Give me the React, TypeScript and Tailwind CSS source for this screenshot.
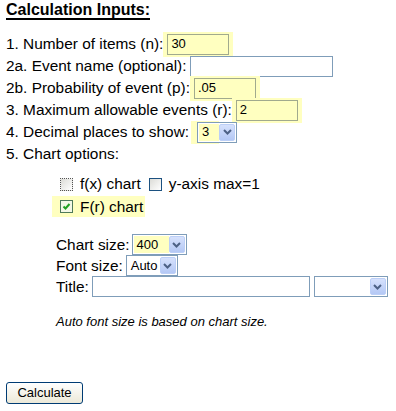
import React from 'react';

const Chevron = () => (
  <svg width="9" height="6" viewBox="0 0 9 6">
    <path d="M1 1 L4.5 4.5 L8 1" fill="none" stroke="#4d6185" strokeWidth="2" />
  </svg>
);

const DropBtn = () => (
  <span className="flex h-[17px] w-[16px] shrink-0 items-center justify-center rounded-[2px] border border-[#bccff7] bg-gradient-to-b from-[#d6e1fc] to-[#b4c8f5]">
    <Chevron />
  </span>
);

type SelectProps = { value: string; widthClass: string; hl?: boolean; hlClass?: string };

const Select: React.FC<SelectProps> = ({ value, widthClass, hl, hlClass }) => (
  <span className={`flex h-[21px] items-center border border-[#7f9db9] bg-white p-[1px] text-[13px] ${widthClass}`}>
    <span className={`flex h-full flex-1 items-center pl-[3px] ${hl ? 'bg-[#ffffc0]' : ''} ${hlClass ?? ''}`}>{value}</span>
    <DropBtn />
  </span>
);

type InputProps = { value?: string; widthClass: string; hl?: boolean };

const TextBox: React.FC<InputProps> = ({ value, widthClass, hl }) => {
  if (hl) {
    return (
      <span className="flex h-[25px] items-center bg-[#ffffc0] pl-[4px] pr-[4px]">
        <span className={`flex h-[21px] items-center border border-[#a1aa8e] bg-[#ffffc0] pl-[3px] text-[13px] ${widthClass}`}>
          {value}
        </span>
      </span>
    );
  }
  return (
    <span className={`flex h-[21px] items-center border border-[#7f9db9] bg-white pl-[3px] text-[13px] ${widthClass}`}>
      {value}
    </span>
  );
};

const Row: React.FC<{ children: React.ReactNode }> = ({ children }) => (
  <div className="flex h-[22px] items-center whitespace-nowrap">{children}</div>
);

const App: React.FC = () => {
  return (
    <div className="h-[411px] w-[396px] overflow-hidden bg-white font-['Liberation_Sans',Arial,sans-serif] text-black">
      <div className="pl-[6px]">
        <h2 className="text-[16px] font-bold leading-[20px] underline decoration-[1.5px] underline-offset-[3px]">
          Calculation Inputs:
        </h2>

        {/* numbered inputs */}
        <div className="mt-[13px] text-[15.4px]">
          <Row>
            <span>1. Number of items (n):</span>
            <TextBox value="30" widthClass="w-[62px]" hl />
          </Row>
          <Row>
            <span className="mr-[3px]">2a. Event name (optional):</span>
            <TextBox widthClass="w-[143px]" />
          </Row>
          <Row>
            <span>2b. Probability of event (p):</span>
            <TextBox value=".05" widthClass="w-[62px]" hl />
          </Row>
          <Row>
            <span>3. Maximum allowable events (r):</span>
            <TextBox value="2" widthClass="w-[62px]" hl />
          </Row>
          <Row>
            <span>4. Decimal places to show:</span>
            <span className="ml-[2px] flex h-[23px] items-center bg-[linear-gradient(to_right,#ffffc0_28px,transparent_28px)] pl-[6px]">
              <Select value="3" widthClass="w-[40px]" hl />
            </span>
          </Row>
          <Row>
            <span>5. Chart options:</span>
          </Row>
        </div>

        {/* chart checkboxes */}
        <div className="mt-[8px] pl-[54px] text-[15.4px]">
          <div className="flex h-[22px] items-center whitespace-nowrap">
            <span className="h-[13px] w-[13px] border border-dotted border-[#555] bg-gradient-to-br from-[#dcdcd7] to-white" />
            <span className="ml-[7px]">f(x) chart</span>
            <span className="ml-[8px] h-[13px] w-[13px] border border-[#1c5180] bg-gradient-to-br from-[#dcdcd7] to-white" />
            <span className="ml-[7px]">y-axis max=1</span>
          </div>
          <div className="mt-[1px] flex">
            <span className="-ml-[8px] flex h-[21px] items-center whitespace-nowrap bg-[#ffffc0] pl-[8px] pr-[2px]">
              <span className="flex h-[13px] w-[13px] items-center justify-center border border-[#4f7a5a] bg-[#f4f8e6]">
                <svg width="9" height="9" viewBox="0 0 9 9">
                  <path d="M1.5 4.5 L3.5 6.5 L7.5 2" fill="none" stroke="#21a121" strokeWidth="2" />
                </svg>
              </span>
              <span className="ml-[7px]">F(r) chart</span>
            </span>
          </div>
        </div>

        {/* chart settings */}
        <div className="mt-[17px] pl-[50px] text-[15.4px]">
          <div className="flex h-[21px] items-center whitespace-nowrap">
            <span className="mr-[2px]">Chart size:</span>
            <Select value="400" widthClass="w-[55px]" hl />
          </div>
          <div className="flex h-[21px] items-center whitespace-nowrap">
            <span className="mr-[3px]">Font size:</span>
            <Select value="Auto" widthClass="w-[52px]" />
          </div>
          <div className="flex h-[21px] items-center whitespace-nowrap">
            <span className="mr-[3px]">Title:</span>
            <TextBox widthClass="w-[218px]" />
            <span className="ml-[4px]">
              <Select value="" widthClass="w-[74px]" />
            </span>
          </div>
          <p className="mt-[17px] text-[13px] italic leading-[16px]">Auto font size is based on chart size.</p>
        </div>

        <button className="mt-[52px] flex h-[22px] w-[77px] items-center justify-center rounded-[3px] border border-[#003c74] bg-gradient-to-b from-white to-[#ece9d8] text-[13px]">
          Calculate
        </button>
      </div>
    </div>
  );
};

export default App;
